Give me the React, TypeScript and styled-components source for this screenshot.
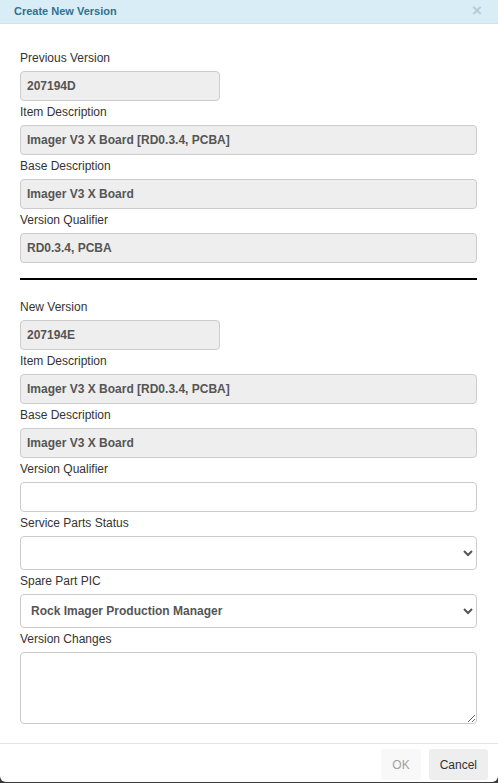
import styled, { createGlobalStyle } from "styled-components";

const GlobalStyle = createGlobalStyle`
  html, body {
    margin: 0;
    padding: 0;
    background-color: #3a3a3a;
  }
  * {
    box-sizing: border-box;
  }
`;

const Dialog = styled.div`
  display: flex;
  flex-direction: column;
  width: 498px;
  height: 782px;
  background-color: #ffffff;
  border-radius: 0 0 6px 6px;
  overflow: hidden;
  font-family: "Liberation Sans", Arial, sans-serif;
`;

const Header = styled.div`
  display: flex;
  align-items: center;
  justify-content: space-between;
  height: 26px;
  padding: 0 14px 2px 14px;
  background-color: #d9edf7;
  border-bottom: 1px solid #cfe3ee;
`;

const Title = styled.h1`
  margin: 0;
  font-size: 11px;
  font-weight: 700;
  color: #31708f;
`;

const CloseButton = styled.button`
  border: none;
  background: none;
  padding: 0;
  margin-right: 2px;
  font-family: "Liberation Sans", Arial, sans-serif;
  font-size: 17px;
  font-weight: 700;
  line-height: 1;
  color: #b4ccd8;
  cursor: pointer;
`;

const Body = styled.div`
  flex: 1;
  padding: 26px 21px 0 20px;
`;

const Field = styled.div`
  display: flex;
  flex-direction: column;
  margin-bottom: 3px;
`;

const Label = styled.label`
  font-size: 12px;
  line-height: 17px;
  color: #333333;
  margin-bottom: 4px;
`;

const Input = styled.input<{ $narrow?: boolean }>`
  width: ${(p) => (p.$narrow ? "200px" : "100%")};
  height: 30px;
  padding: 0 6px;
  border: 1px solid #cccccc;
  border-radius: 4px;
  font-family: "Liberation Sans", Arial, sans-serif;
  font-size: 12px;
  font-weight: 700;
  color: #555555;
  background-color: ${(p) => (p.readOnly ? "#eeeeee" : "#ffffff")};
  outline: none;
`;

const Select = styled.select`
  width: 100%;
  height: 34px;
  padding: 0 6px;
  border: 1px solid #cccccc;
  border-radius: 4px;
  font-family: "Liberation Sans", Arial, sans-serif;
  font-size: 12px;
  font-weight: 700;
  color: #555555;
  background-color: #ffffff;
  outline: none;
`;

const TextArea = styled.textarea`
  width: 100%;
  height: 72px;
  padding: 6px 8px;
  border: 1px solid #cccccc;
  border-radius: 4px;
  font-family: "Liberation Sans", Arial, sans-serif;
  font-size: 12px;
  color: #555555;
  outline: none;
  display: block;
`;

const Divider = styled.hr`
  margin: 15px 0 19px 0;
  border: none;
  border-top: 2px solid #000000;
`;

const Footer = styled.div`
  display: flex;
  justify-content: flex-end;
  gap: 8px;
  margin-top: 16px;
  padding: 5px 10px 2px 10px;
  border-top: 1px solid #e5e5e5;
`;

const Button = styled.button<{ $disabled?: boolean }>`
  height: 31px;
  padding: 0 11px;
  border: none;
  border-radius: 3px;
  font-family: "Liberation Sans", Arial, sans-serif;
  font-size: 12px;
  color: ${(p) => (p.$disabled ? "#a0a0a0" : "#333333")};
  background-color: ${(p) => (p.$disabled ? "#f8f8f8" : "#eeeeee")};
  cursor: ${(p) => (p.$disabled ? "default" : "pointer")};
`;

const previous = [
  { label: "Previous Version", value: "207194D", narrow: true },
  { label: "Item Description", value: "Imager V3 X Board [RD0.3.4, PCBA]" },
  { label: "Base Description", value: "Imager V3 X Board" },
  { label: "Version Qualifier", value: "RD0.3.4, PCBA" },
];

const next = [
  { label: "New Version", value: "207194E", narrow: true },
  { label: "Item Description", value: "Imager V3 X Board [RD0.3.4, PCBA]" },
  { label: "Base Description", value: "Imager V3 X Board" },
];

function App() {
  return (
    <>
      <GlobalStyle />
      <Dialog>
        <Header>
          <Title>Create New Version</Title>
          <CloseButton>×</CloseButton>
        </Header>

        <Body>
          {previous.map((f) => (
            <Field key={"p" + f.label}>
              <Label>{f.label}</Label>
              <Input readOnly $narrow={f.narrow} value={f.value} />
            </Field>
          ))}

          <Divider />

          {next.map((f) => (
            <Field key={"n" + f.label}>
              <Label>{f.label}</Label>
              <Input readOnly $narrow={f.narrow} value={f.value} />
            </Field>
          ))}

          <Field>
            <Label>Version Qualifier</Label>
            <Input defaultValue="" />
          </Field>

          <Field>
            <Label>Service Parts Status</Label>
            <Select defaultValue="">
              <option value=""></option>
              <option value="active">Active</option>
            </Select>
          </Field>

          <Field>
            <Label>Spare Part PIC</Label>
            <Select defaultValue="rock">
              <option value="rock">Rock Imager Production Manager</option>
            </Select>
          </Field>

          <Field>
            <Label>Version Changes</Label>
            <TextArea />
          </Field>
        </Body>

        <Footer>
          <Button $disabled>OK</Button>
          <Button>Cancel</Button>
        </Footer>
      </Dialog>
    </>
  );
}

export default App;
